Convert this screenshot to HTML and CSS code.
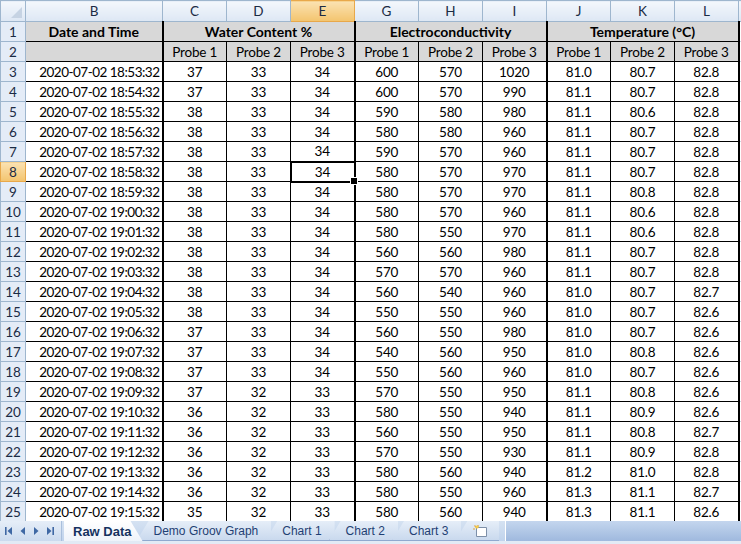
FILE: index.html
```html
<!DOCTYPE html>
<html>
<head>
    <meta charset="UTF-8">
    <title>Raw Data</title>
    <link rel="stylesheet" href="styles.css">
</head>
<body>
    <div class="sheet">
        <table class="grid">
            <colgroup>
                <col class="c-rh"><col class="c-date">
                <col class="c-num"><col class="c-num"><col class="c-num">
                <col class="c-num"><col class="c-num"><col class="c-num">
                <col class="c-num"><col class="c-num"><col class="c-num">
                <col class="c-num">
            </colgroup>
            <tr class="letters">
                <th class="corner"><span class="tri"></span></th>
                <th>B</th><th>C</th><th>D</th><th class="hl">E</th>
                <th>G</th><th>H</th><th>I</th><th>J</th><th>K</th><th>L</th><th></th>
            </tr>
            <tr class="head">
                <th class="rh">1</th>
                <td class="title">Date and Time</td>
                <td class="title tl" colspan="3">Water Content %</td>
                <td class="title tl" colspan="3">Electroconductivity</td>
                <td class="title tl tr" colspan="3">Temperature (°C)</td>
                <td class="blank"></td>
            </tr>
            <tr class="head">
                <th class="rh">2</th>
                <td></td>
                <td class="tl">Probe 1</td><td>Probe 2</td><td>Probe 3</td>
                <td class="tl">Probe 1</td><td>Probe 2</td><td>Probe 3</td>
                <td class="tl">Probe 1</td><td>Probe 2</td><td class="tr">Probe 3</td>
                <td class="blank"></td>
            </tr>
            <tr><th class="rh">3</th><td class="date">2020-07-02 18:53:32</td><td class="tl">37</td><td>33</td><td>34</td><td class="tl">600</td><td>570</td><td>1020</td><td class="tl">81.0</td><td>80.7</td><td class="tr">82.8</td><td class="blank"></td></tr>
            <tr><th class="rh">4</th><td class="date">2020-07-02 18:54:32</td><td class="tl">37</td><td>33</td><td>34</td><td class="tl">600</td><td>570</td><td>990</td><td class="tl">81.1</td><td>80.7</td><td class="tr">82.8</td><td class="blank"></td></tr>
            <tr><th class="rh">5</th><td class="date">2020-07-02 18:55:32</td><td class="tl">38</td><td>33</td><td>34</td><td class="tl">590</td><td>580</td><td>980</td><td class="tl">81.1</td><td>80.6</td><td class="tr">82.8</td><td class="blank"></td></tr>
            <tr><th class="rh">6</th><td class="date">2020-07-02 18:56:32</td><td class="tl">38</td><td>33</td><td>34</td><td class="tl">580</td><td>580</td><td>960</td><td class="tl">81.1</td><td>80.7</td><td class="tr">82.8</td><td class="blank"></td></tr>
            <tr><th class="rh">7</th><td class="date">2020-07-02 18:57:32</td><td class="tl">38</td><td>33</td><td>34</td><td class="tl">590</td><td>570</td><td>960</td><td class="tl">81.1</td><td>80.7</td><td class="tr">82.8</td><td class="blank"></td></tr>
            <tr><th class="rh hl">8</th><td class="date">2020-07-02 18:58:32</td><td class="tl">38</td><td>33</td><td class="sel">34</td><td class="tl">580</td><td>570</td><td>970</td><td class="tl">81.1</td><td>80.7</td><td class="tr">82.8</td><td class="blank"></td></tr>
            <tr><th class="rh">9</th><td class="date">2020-07-02 18:59:32</td><td class="tl">38</td><td>33</td><td>34</td><td class="tl">580</td><td>570</td><td>970</td><td class="tl">81.1</td><td>80.8</td><td class="tr">82.8</td><td class="blank"></td></tr>
            <tr><th class="rh">10</th><td class="date">2020-07-02 19:00:32</td><td class="tl">38</td><td>33</td><td>34</td><td class="tl">580</td><td>570</td><td>960</td><td class="tl">81.1</td><td>80.6</td><td class="tr">82.8</td><td class="blank"></td></tr>
            <tr><th class="rh">11</th><td class="date">2020-07-02 19:01:32</td><td class="tl">38</td><td>33</td><td>34</td><td class="tl">580</td><td>550</td><td>970</td><td class="tl">81.1</td><td>80.6</td><td class="tr">82.8</td><td class="blank"></td></tr>
            <tr><th class="rh">12</th><td class="date">2020-07-02 19:02:32</td><td class="tl">38</td><td>33</td><td>34</td><td class="tl">560</td><td>560</td><td>980</td><td class="tl">81.1</td><td>80.7</td><td class="tr">82.8</td><td class="blank"></td></tr>
            <tr><th class="rh">13</th><td class="date">2020-07-02 19:03:32</td><td class="tl">38</td><td>33</td><td>34</td><td class="tl">570</td><td>570</td><td>960</td><td class="tl">81.1</td><td>80.7</td><td class="tr">82.8</td><td class="blank"></td></tr>
            <tr><th class="rh">14</th><td class="date">2020-07-02 19:04:32</td><td class="tl">38</td><td>33</td><td>34</td><td class="tl">560</td><td>540</td><td>960</td><td class="tl">81.0</td><td>80.7</td><td class="tr">82.7</td><td class="blank"></td></tr>
            <tr><th class="rh">15</th><td class="date">2020-07-02 19:05:32</td><td class="tl">38</td><td>33</td><td>34</td><td class="tl">550</td><td>550</td><td>960</td><td class="tl">81.0</td><td>80.7</td><td class="tr">82.6</td><td class="blank"></td></tr>
            <tr><th class="rh">16</th><td class="date">2020-07-02 19:06:32</td><td class="tl">37</td><td>33</td><td>34</td><td class="tl">560</td><td>550</td><td>980</td><td class="tl">81.0</td><td>80.7</td><td class="tr">82.6</td><td class="blank"></td></tr>
            <tr><th class="rh">17</th><td class="date">2020-07-02 19:07:32</td><td class="tl">37</td><td>33</td><td>34</td><td class="tl">540</td><td>560</td><td>950</td><td class="tl">81.0</td><td>80.8</td><td class="tr">82.6</td><td class="blank"></td></tr>
            <tr><th class="rh">18</th><td class="date">2020-07-02 19:08:32</td><td class="tl">37</td><td>33</td><td>34</td><td class="tl">550</td><td>560</td><td>960</td><td class="tl">81.0</td><td>80.7</td><td class="tr">82.6</td><td class="blank"></td></tr>
            <tr><th class="rh">19</th><td class="date">2020-07-02 19:09:32</td><td class="tl">37</td><td>32</td><td>33</td><td class="tl">570</td><td>550</td><td>950</td><td class="tl">81.1</td><td>80.8</td><td class="tr">82.6</td><td class="blank"></td></tr>
            <tr><th class="rh">20</th><td class="date">2020-07-02 19:10:32</td><td class="tl">36</td><td>32</td><td>33</td><td class="tl">580</td><td>550</td><td>940</td><td class="tl">81.1</td><td>80.9</td><td class="tr">82.6</td><td class="blank"></td></tr>
            <tr><th class="rh">21</th><td class="date">2020-07-02 19:11:32</td><td class="tl">36</td><td>32</td><td>33</td><td class="tl">560</td><td>550</td><td>950</td><td class="tl">81.1</td><td>80.8</td><td class="tr">82.7</td><td class="blank"></td></tr>
            <tr><th class="rh">22</th><td class="date">2020-07-02 19:12:32</td><td class="tl">36</td><td>32</td><td>33</td><td class="tl">570</td><td>550</td><td>930</td><td class="tl">81.1</td><td>80.9</td><td class="tr">82.8</td><td class="blank"></td></tr>
            <tr><th class="rh">23</th><td class="date">2020-07-02 19:13:32</td><td class="tl">36</td><td>32</td><td>33</td><td class="tl">580</td><td>560</td><td>940</td><td class="tl">81.2</td><td>81.0</td><td class="tr">82.8</td><td class="blank"></td></tr>
            <tr><th class="rh">24</th><td class="date">2020-07-02 19:14:32</td><td class="tl">36</td><td>32</td><td>33</td><td class="tl">580</td><td>550</td><td>960</td><td class="tl">81.3</td><td>81.1</td><td class="tr">82.7</td><td class="blank"></td></tr>
            <tr><th class="rh">25</th><td class="date">2020-07-02 19:15:32</td><td class="tl">35</td><td>32</td><td>33</td><td class="tl">580</td><td>560</td><td>940</td><td class="tl">81.3</td><td>81.1</td><td class="tr">82.6</td><td class="blank"></td></tr>
        </table>
    </div>

    <div class="tabbar">
        <div class="nav">
            <svg width="8" height="8" viewBox="0 0 8 8"><rect x="0" y="0" width="1.6" height="8"/><path d="M7 0 L2.5 4 L7 8Z"/></svg>
            <svg width="6" height="8" viewBox="0 0 6 8"><path d="M5 0 L0.5 4 L5 8Z"/></svg>
            <svg width="6" height="8" viewBox="0 0 6 8"><path d="M1 0 L5.5 4 L1 8Z"/></svg>
            <svg width="8" height="8" viewBox="0 0 8 8"><path d="M1 0 L5.5 4 L1 8Z"/><rect x="6.4" y="0" width="1.6" height="8"/></svg>
        </div>
        <div class="tabs">
            <div class="tab active">Raw Data</div>
            <div class="tab">Demo Groov Graph</div>
            <div class="tab">Chart 1</div>
            <div class="tab">Chart 2</div>
            <div class="tab">Chart 3</div>
            <div class="tab add">
                <svg width="16" height="13" viewBox="0 0 16 13">
                    <path d="M3.5 3.5 H13.5 V12.5 H3.5Z" fill="#fff" stroke="#7d8fa8"/>
                    <path d="M3.5 3.5 L1.5 1.5 M5 1 V3 M2 5 H0" stroke="#e0a63a" stroke-width="1.2"/>
                    <circle cx="4" cy="3" r="1.6" fill="#f7cc4a"/>
                </svg>
            </div>
        </div>
        <div class="hscroll"></div>
    </div>
</body>
</html>
```

FILE: styles.css
```css
:root {
    --header-line: #9eb6ce;
    --header-bg: #e4ecf7;
    --head-grey: #d8d8d8;
    --tab-text: #1f3f73;
}

* {
    box-sizing: border-box;
    margin: 0;
    padding: 0;
}

body {
    width: 741px;
    height: 544px;
    overflow: hidden;
    display: flex;
    flex-direction: column;
    background: #fff;
    font-family: Lato, 'Liberation Sans', sans-serif;
    color: #000;
}

.sheet {
    height: 521px;
    overflow: hidden;
}

.grid {
    border-collapse: collapse;
    table-layout: fixed;
    width: 802px;
    font-size: 13.5px;
}

.c-rh { width: 25px; }
.c-date { width: 137px; }
.c-num { width: 64px; }

.grid td {
    height: 20px;
    border: 1px solid #000;
    text-align: center;
    white-space: nowrap;
    overflow: hidden;
    line-height: 18px;
    letter-spacing: -0.2px;
}

.grid th {
    font-weight: normal;
    color: #1b2b44;
    border: 1px solid var(--header-line);
    line-height: 18px;
}

.letters th {
    height: 21px;
    background: linear-gradient(#f3f7fc, #dde7f4);
}

.letters th.hl,
.rh.hl {
    background: linear-gradient(#fbe2b2, #f3c46e);
    border-color: #e8a84a;
}

.corner {
    position: relative;
}

.tri {
    position: absolute;
    right: 3px;
    bottom: 3px;
    width: 0;
    height: 0;
    border-left: 11px solid transparent;
    border-bottom: 11px solid #c6d3e3;
}

.rh {
    background: var(--header-bg);
    text-align: center;
}

.head td {
    background: var(--head-grey);
}

.head td.blank,
td.blank {
    background: #fff;
    border: 1px solid #d0d7e5;
}

.grid td.title {
    font-weight: bold;
    font-size: 14px;
    letter-spacing: 0;
}

.grid td.date {
    text-align: right;
    padding-right: 2px;
    letter-spacing: -0.5px;
}

.grid td.tl { border-left: 2px solid #000; }
.grid td.tr { border-right: 2px solid #000; }

.grid td.sel {
    border: 2px solid #000;
    position: relative;
    overflow: visible;
}

.sel::after {
    content: "";
    position: absolute;
    right: -4px;
    bottom: -4px;
    width: 6px;
    height: 6px;
    background: #000;
    border: 1px solid #fff;
}

.tabbar {
    height: 23px;
    display: flex;
    align-items: stretch;
    background: linear-gradient(#d5e2f2, #c0d3ec);
    border-bottom: 3px solid #e2eaf5;
}

.nav {
    width: 62px;
    display: flex;
    align-items: center;
    gap: 7px;
    padding-left: 5px;
    background: linear-gradient(#e6eef8, #cbdaee);
    border-right: 1px solid #a9bfdc;
}

.nav svg {
    fill: #3f68a4;
}

.tabs {
    display: flex;
    align-items: stretch;
    padding-left: 2px;
}

.tab {
    display: flex;
    align-items: center;
    padding: 0 13px 0 17px;
    margin-right: -6px;
    font-family: 'Liberation Sans', Arial, sans-serif;
    font-size: 12px;
    color: var(--tab-text);
    background: linear-gradient(#e6eef8, #c9d9ee);
    clip-path: polygon(0 100%, 12px 0, 100% 0, 100% 100%);
    border-bottom: 1px solid #8fa9cf;
}

.tab + .tab {
    box-shadow: inset 1px 0 0 #9fb5d6;
}

.tab.active {
    z-index: 2;
    padding: 0 11px 0 9px;
    font-size: 13px;
    font-weight: bold;
    color: #15325f;
    background: linear-gradient(#ffffff, #eef3fa);
    clip-path: polygon(0 0, calc(100% - 12px) 0, 100% 100%, 0 100%);
    border-bottom: none;
}

.tab.add {
    padding: 0 10px 0 18px;
}

.hscroll {
    flex: 1;
    margin-left: 12px;
    background: linear-gradient(#c4d6ee, #9fb9de);
    border-left: 1px solid #fff;
}
```
